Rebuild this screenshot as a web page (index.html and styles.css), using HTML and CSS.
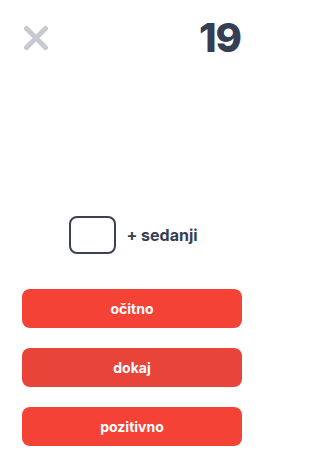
FILE: index.html
```html
<!DOCTYPE html>
<html lang="sl">
<head>
<meta charset="utf-8">
<meta name="viewport" content="width=265">
<link rel="stylesheet" href="styles.css">
</head>
<body>
<div class="screen">
  <header class="top">
    <button class="close" aria-label="Zapri">
      <svg width="26" height="26" viewBox="0 0 26 26"><path d="M3.5 3.5 L22.5 22.5 M22.5 3.5 L3.5 22.5" stroke="#c6c9d0" stroke-width="5" stroke-linecap="round" fill="none"/></svg>
    </button>
    <div class="count">19</div>
  </header>
  <div class="spacer"></div>
  <div class="prompt">
    <div class="blank"></div>
    <span class="word">+ sedanji</span>
  </div>
  <div class="answers">
    <button class="answer">očitno</button>
    <button class="answer dark">dokaj</button>
    <button class="answer">pozitivno</button>
  </div>
</div>
</body>
</html>
```
FILE: styles.css
```css
html, body {
  margin: 0;
  padding: 0;
  background: #fff;
}
.screen {
  width: 265px;
  height: 471px;
  display: flex;
  flex-direction: column;
  font-family: Inter, "Noto Sans", sans-serif;
}
.top {
  display: flex;
  justify-content: space-between;
  align-items: center;
  padding: 16px 24px 0 23px;
}
.close {
  border: 0;
  background: none;
  padding: 0;
  width: 26px;
  height: 26px;
  display: block;
}
.close svg { display: block; }
.count {
  font-size: 40px;
  font-weight: 800;
  color: #363e53;
  letter-spacing: -1px;
  line-height: 44px;
}
.spacer { flex: 1; }
.prompt {
  display: flex;
  align-items: center;
  justify-content: center;
  gap: 10px;
  padding-left: 2px;
}
.blank {
  width: 43px;
  height: 34px;
  border: 2px solid #3d4252;
  border-radius: 8px;
}
.word {
  font-size: 16px;
  font-weight: 700;
  color: #363e53;
}
.answers {
  display: flex;
  flex-direction: column;
  gap: 20px;
  padding: 35px 23px 25px 22px;
}
.answer {
  height: 39px;
  border: 0;
  border-radius: 8px;
  background: #f44336;
  color: #fff;
  font-family: Inter, "Noto Sans", sans-serif;
  font-size: 14px;
  font-weight: 700;
}
.answer.dark { background: #e8443a; }
```
